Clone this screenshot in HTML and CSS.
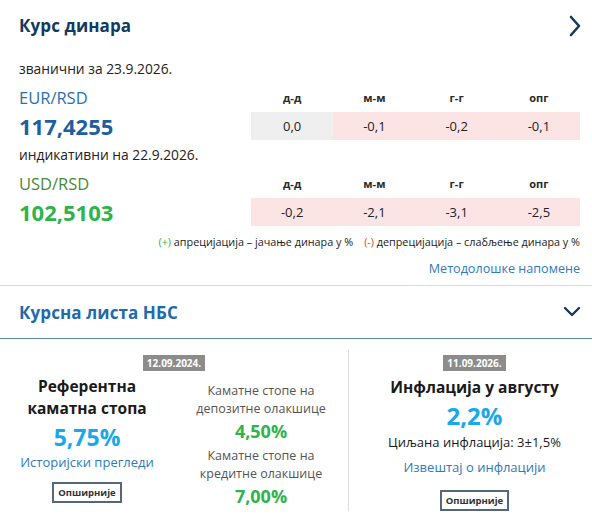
FILE: index.html
```html
<!DOCTYPE html>
<html lang="sr">
<head>
<meta charset="utf-8">
<title>Курс динара</title>
<link rel="stylesheet" href="styles.css">
</head>
<body>
<section class="rates">
  <div class="head">
    <h2 class="title">Курс динара</h2>
    <svg class="chev-right" width="14" height="22" viewBox="0 0 14 22"><path d="M3 2 L11 11 L3 20" fill="none" stroke="#143a5e" stroke-width="2.6" stroke-linecap="round" stroke-linejoin="round"/></svg>
  </div>
  <div class="date-line date-first">званични за 23.9.2026.</div>
  <div class="rate-block">
    <div class="pair eur">EUR/RSD</div>
    <div class="th">д-д</div><div class="th">м-м</div><div class="th">г-г</div><div class="th">опг</div>
    <div class="val eur-val">117,4255</div>
    <div class="td zero">0,0</div><div class="td neg">-0,1</div><div class="td neg">-0,2</div><div class="td neg">-0,1</div>
  </div>
  <div class="date-line">индикативни на 22.9.2026.</div>
  <div class="rate-block">
    <div class="pair usd">USD/RSD</div>
    <div class="th">д-д</div><div class="th">м-м</div><div class="th">г-г</div><div class="th">опг</div>
    <div class="val usd-val">102,5103</div>
    <div class="td neg">-0,2</div><div class="td neg">-2,1</div><div class="td neg">-3,1</div><div class="td neg">-2,5</div>
  </div>
  <div class="legend"><span class="plus">(+)</span> апрецијација – јачање динара у %<span class="gap"></span><span class="minus">(-)</span> депрецијација – слабљење динара у %</div>
  <div class="notes"><a href="#" class="link notes-link">Методолошке напомене</a></div>
</section>
<section class="list">
  <h2 class="list-title">Курсна листа НБС</h2>
  <svg class="chev-down" width="18" height="14" viewBox="0 0 18 14"><path d="M2 3 L9 10 L16 3" fill="none" stroke="#173a5c" stroke-width="2.4" stroke-linecap="round" stroke-linejoin="round"/></svg>
</section>
<section class="bottom">
  <div class="col-left">
    <div class="badge-row"><span class="badge">12.09.2024.</span></div>
    <div class="subcols">
      <div class="sub sub-ref">
        <div class="big-title">Референтна<br>каматна стопа</div>
        <div class="pct cyan">5,75%</div>
        <a href="#" class="link small-link">Историјски прегледи</a>
        <button class="more more-left">Опширније</button>
      </div>
      <div class="sub sub-fac">
        <div class="fac-label">Каматне стопе на<br>депозитне олакшице</div>
        <div class="fac-pct">4,50%</div>
        <div class="fac-label">Каматне стопе на<br>кредитне олакшице</div>
        <div class="fac-pct">7,00%</div>
      </div>
    </div>
  </div>
  <div class="col-right">
    <div class="badge-row"><span class="badge">11.09.2026.</span></div>
    <div class="big-title">Инфлација у августу</div>
    <div class="pct cyan infl">2,2%</div>
    <div class="target">Циљана инфлација: 3±1,5%</div>
    <a href="#" class="link small-link">Извештај о инфлацији</a>
    <button class="more more-right">Опширније</button>
  </div>
</section>
</body>
</html>
```
FILE: styles.css
```css
* { box-sizing: border-box; }
html, body { margin: 0; padding: 0; background: #fff; }
body {
  font-family: "Open Sans", "Noto Sans", sans-serif;
  color: #222;
  width: 592px;
  height: 518px;
  overflow: hidden;
}
a { text-decoration: none; }

.rates { padding: 0 12px 0 19px; border-bottom: 1px solid #dcdcdc; }
.head { height: 50px; display: flex; align-items: center; justify-content: space-between; }
.title { margin: 0; font-size: 17px; font-weight: 700; color: #123a5e; letter-spacing: 0.1px; }
.chev-right { margin-right: -2px; margin-top: 1px; }

.date-line { height: 30px; line-height: 30px; font-size: 13.8px; color: #222; }
.date-first { margin-top: 4px; }

.rate-block {
  display: grid;
  grid-template-columns: 232px repeat(4, 1fr);
  grid-template-rows: 28px 28px;
  align-items: center;
}
.pair { font-size: 16.5px; line-height: 28px; }
.eur { color: #2d6fb0; }
.usd { color: #4a8b3b; }
.val { font-size: 22px; font-weight: 700; line-height: 28px; }
.eur-val { color: #1f5f9f; }
.usd-val { color: #2eb34d; }
.th { text-align: center; font-size: 11px; font-weight: 700; color: #2a2a2a; line-height: 28px; }
.td { text-align: center; font-size: 13px; color: #222; height: 28px; line-height: 28px; }
.zero { background: #efefef; }
.neg { background: #fde4e4; }

.legend { margin-top: 8px; text-align: right; font-size: 10.8px; line-height: 16px; color: #222; white-space: nowrap; }
.legend .gap { display: inline-block; width: 11px; }
.plus { color: #2eb34d; }
.minus { color: #e53935; }
.notes { text-align: right; line-height: 18px; margin-top: 8px; padding-bottom: 7px; }
.link { color: #2f79bd; font-size: 13px; }
.notes-link { font-size: 12.6px; }

.list {
  height: 53px;
  padding: 0 12px 0 19px;
  display: flex;
  align-items: center;
  justify-content: space-between;
  border-bottom: 1px solid #5b87b8;
}
.list-title { margin: 0; font-size: 17px; font-weight: 700; color: #1e6aae; letter-spacing: 0.1px; }
.chev-down { margin-right: -1px; }

.bottom { display: flex; height: 180px; }
.col-left { width: 349px; border-right: 1px solid #dedede; margin-top: 11px; margin-bottom: 8px; }
.badge-row { text-align: center; height: 16px; }
.badge {
  display: inline-block;
  background: #8c8c8c;
  color: #fff;
  font-size: 10px;
  font-weight: 700;
  line-height: 16px;
  padding: 0 4px;
}
.subcols { display: grid; grid-template-columns: 174px 174px; }
.sub { display: flex; flex-direction: column; align-items: center; text-align: center; }
.sub-ref { padding-top: 9px; }
.big-title { font-size: 15.5px; font-weight: 700; line-height: 22px; color: #1a1a1a; text-align: center; }
.pct { font-size: 23px; font-weight: 700; line-height: 30px; }
.cyan { color: #1aa8ea; }
.sub-ref .pct { margin-top: 3px; }
.small-link { line-height: 20px; }
.more {
  font-family: "Open Sans", "Noto Sans", sans-serif;
  font-size: 9.5px;
  font-weight: 700;
  color: #333;
  background: #fff;
  border: 2px solid #56677a;
  padding: 0 4px;
  height: 21px;
  line-height: 17px;
  cursor: pointer;
}
.more-left { margin-top: 10px; }
.sub-fac { padding-top: 16px; }
.fac-label { font-size: 12.5px; line-height: 18px; color: #555; }
.fac-pct { font-size: 18px; font-weight: 700; color: #2eb34d; line-height: 26px; margin-bottom: 3px; }

.col-right {
  flex: 1;
  padding-left: 8px;
  padding-top: 11px;
  display: flex;
  flex-direction: column;
  align-items: center;
}
.col-right .big-title { margin-top: 10px; }
.infl { font-size: 24px; line-height: 32px; margin-top: 2px; }
.target { font-size: 13px; line-height: 20px; color: #1a1a1a; }
.col-right .small-link { margin-top: 5px; }
.more-right { margin-top: 13px; }
```
